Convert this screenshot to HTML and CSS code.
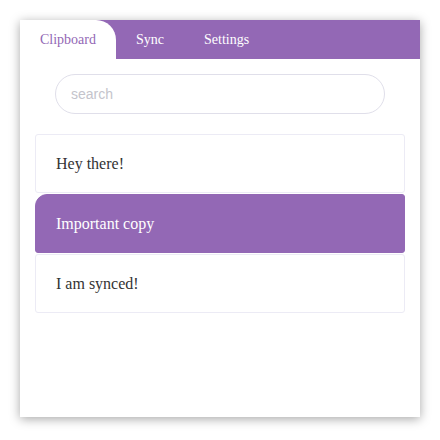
FILE: index.html
```html
<!DOCTYPE html>
<html>
<head>
<meta charset="utf-8">
<link rel="stylesheet" href="styles.css">
</head>
<body>
<div class="app">
  <nav class="tabs">
    <div class="tab active">Clipboard</div>
    <div class="tab">Sync</div>
    <div class="tab">Settings</div>
  </nav>
  <main class="content">
    <div class="search-wrap">
      <input class="search" type="text" placeholder="search">
    </div>
    <ul class="clips">
      <li class="clip">Hey there!</li>
      <li class="clip selected">Important copy</li>
      <li class="clip">I am synced!</li>
    </ul>
  </main>
</div>
</body>
</html>
```

FILE: styles.css
```css
html, body {
  margin: 0;
  padding: 0;
  background: #ffffff;
}
body {
  padding: 20px;
  font-family: "Liberation Serif", "Times New Roman", serif;
}
.app {
  width: 400px;
  height: 397px;
  background: #fff;
  box-shadow: 0 2px 10px rgba(0, 0, 0, 0.35);
  display: flex;
  flex-direction: column;
}
.tabs {
  display: flex;
  height: 39px;
  background: #9368b5;
}
.tab {
  padding: 0 20px;
  display: flex;
  align-items: center;
  font-size: 14px;
  color: #fff;
}
.tab.active {
  background: #fff;
  color: #9368b5;
  border-top-right-radius: 20px;
}
.content {
  padding: 15px 15px 0;
}
.search-wrap {
  padding: 0 20px;
}
.search {
  box-sizing: border-box;
  width: 100%;
  height: 40px;
  border: 1px solid #e0dfea;
  border-radius: 20px;
  padding: 0 15px;
  font-family: "Liberation Sans", Arial, sans-serif;
  font-size: 14px;
  outline: none;
}
.search::placeholder {
  color: #c4c4cc;
}
.clips {
  list-style: none;
  margin: 20px 0 0;
  padding: 0;
  display: flex;
  flex-direction: column;
  gap: 1px;
}
.clip {
  border: 1px solid #ecebf5;
  border-radius: 3px;
  padding: 20px;
  font-size: 16px;
  color: #333;
  line-height: 17px;
}
.clip.selected {
  background: #9368b5;
  border-color: #9368b5;
  color: #fff;
  border-top-left-radius: 12px;
}
```
